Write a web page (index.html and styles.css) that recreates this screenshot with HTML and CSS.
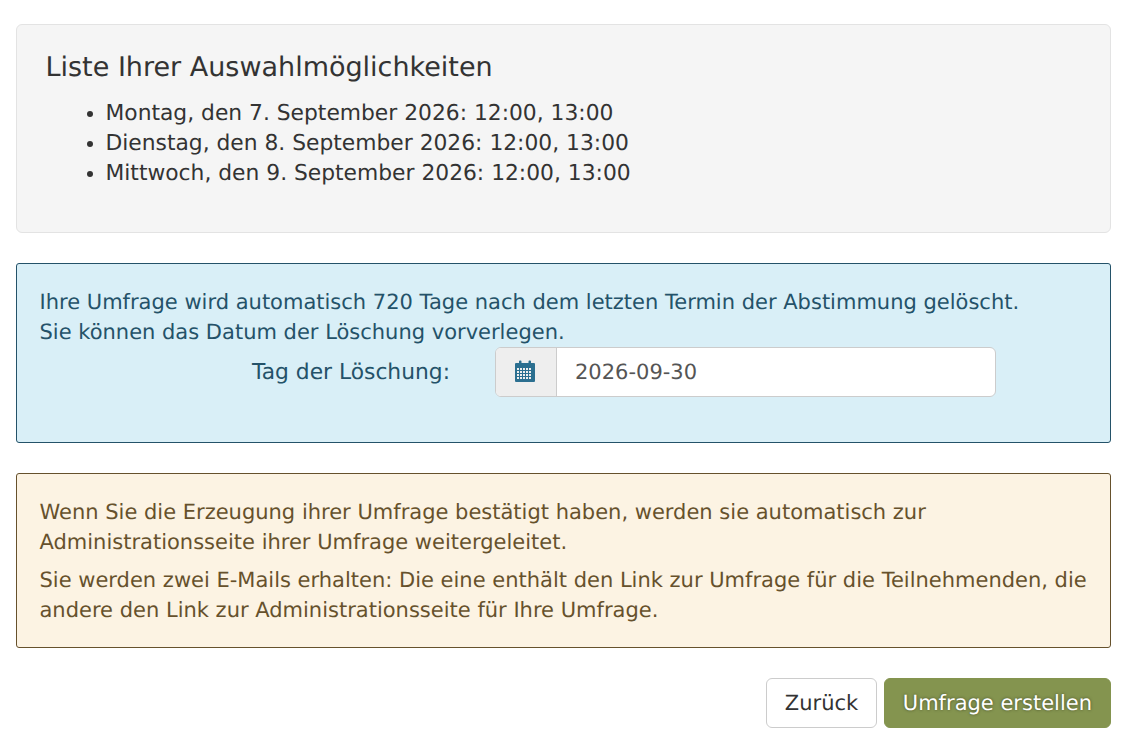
FILE: index.html
```html
<!DOCTYPE html>
<html lang="de">
<head>
  <meta charset="UTF-8">
  <title>Umfrage erstellen</title>
  <link rel="stylesheet" href="styles.css">
</head>
<body>

<main class="page">
  <section class="well">
    <h4>Liste Ihrer Auswahlmöglichkeiten</h4>
    <ul>
      <li>Montag, den 7. September 2026: 12:00, 13:00</li>
      <li>Dienstag, den 8. September 2026: 12:00, 13:00</li>
      <li>Mittwoch, den 9. September 2026: 12:00, 13:00</li>
    </ul>
  </section>

  <section class="alert alert-info">
    <div>Ihre Umfrage wird automatisch 720 Tage nach dem letzten Termin der Abstimmung gelöscht.</div>
    <div>Sie können das Datum der Löschung vorverlegen.</div>
    <div class="form-row">
      <label for="enddate">Tag der Löschung:</label>
      <div class="input-group">
        <span class="input-addon">
          <svg width="20" height="22" viewBox="0 0 20 22" aria-hidden="true">
            <path fill="#2b6f90" fill-rule="evenodd" d="M1 3h3V1.500a1 1 0 0 1 1-1h.5a1 1 0 0 1 1 1V3h7V1.500a1 1 0 0 1 1-1h.5a1 1 0 0 1 1 1V3h3a1 1 0 0 1 1 1v17a1 1 0 0 1-1 1H1a1 1 0 0 1-1-1V4a1 1 0 0 1 1-1zM2 8v2h2V8zm3 0v2h2V8zm3 0v2h2V8zm3 0v2h2V8zm3 0v2h2V8zM2 11v2h2v-2zm3 0v2h2v-2zm3 0v2h2v-2zm3 0v2h2v-2zm3 0v2h2v-2zM2 14v2h2v-2zm3 0v2h2v-2zm3 0v2h2v-2zm3 0v2h2v-2zm3 0v2h2v-2zM2 17v2h2v-2zm3 0v2h2v-2zm3 0v2h2v-2zm3 0v2h2v-2zm3 0v2h2v-2z"/>
          </svg>
        </span>
        <input type="text" id="enddate" value="2026-09-30">
      </div>
    </div>
  </section>

  <section class="alert alert-warning">
    <p>Wenn Sie die Erzeugung ihrer Umfrage bestätigt haben, werden sie automatisch zur Administrationsseite ihrer Umfrage weitergeleitet.</p>
    <p>Sie werden zwei E-Mails erhalten: Die eine enthält den Link zur Umfrage für die Teilnehmenden, die andere den Link zur Administrationsseite für Ihre Umfrage.</p>
  </section>

  <div class="actions">
    <button class="btn btn-back">Zurück</button>
    <button class="btn btn-success">Umfrage erstellen</button>
  </div>
</main>

</body>
</html>
```

FILE: styles.css
```css
body {
  margin: 0;
  background: #fff;
  color: #333;
  font-family: "DejaVu Sans", sans-serif;
  font-size: 21px;
  line-height: 30px;
  text-rendering: geometricPrecision;
}

.page {
  padding: 24px 16px 20px;
}

.well {
  height: 209px;
  box-sizing: border-box;
  margin-bottom: 30px;
  padding: 29px 28.5px;
  background: #f5f5f5;
  border: 1px solid #e3e3e3;
  border-radius: 6px;
}

.well h4 {
  margin: 0 0 17px;
  font-size: 27px;
  font-weight: 400;
  line-height: 28px;
}

.well ul {
  margin: 0;
  padding-left: 60px;
  font-size: 21.8px;
}

.alert {
  box-sizing: border-box;
  margin-bottom: 30px;
  padding: 23px 22px 23px 22.5px;
  border: 1px solid;
  border-radius: 3px;
}

.alert-info {
  height: 180px;
  background: #d9eff7;
  border-color: #245269;
  color: #245269;
}

.alert-warning {
  height: 175px;
  background: #fcf3e3;
  border-color: #66512c;
  color: #66512c;
}

.alert p {
  margin: 0 0 8px;
}

.form-row {
  display: flex;
  align-items: center;
}

.form-row label {
  width: 410.5px;
  margin-right: 45px;
  padding-top: 2px;
  text-align: right;
  font-size: 21.8px;
}

.input-group {
  display: flex;
  width: 501px;
  height: 50px;
  box-sizing: border-box;
  border: 1px solid #ccc;
  border-radius: 6px;
  background: #fff;
  overflow: hidden;
}

.input-addon {
  display: flex;
  align-items: center;
  justify-content: center;
  width: 61px;
  box-sizing: border-box;
  padding: 0 2px 2px 0;
  background: #eee;
  border-right: 1px solid #ccc;
}

.input-group input {
  flex: 1;
  min-width: 0;
  padding: 0 18px;
  border: none;
  outline: none;
  background: transparent;
  color: #555;
  font: inherit;
  text-rendering: geometricPrecision;
}

.actions {
  display: flex;
  justify-content: flex-end;
  gap: 7px;
}

.btn {
  height: 50px;
  padding: 0 18px;
  background: #fff;
  border: 1px solid #ccc;
  border-radius: 6px;
  color: #333;
  font: inherit;
  text-rendering: geometricPrecision;
  cursor: pointer;
}

.btn-back {
  width: 111px;
}

.btn-success {
  background: #84944f;
  border-color: #84944f;
  color: #fff;
  text-shadow: 0 0 3px rgba(0, 0, 0, 0.5);
}
```
